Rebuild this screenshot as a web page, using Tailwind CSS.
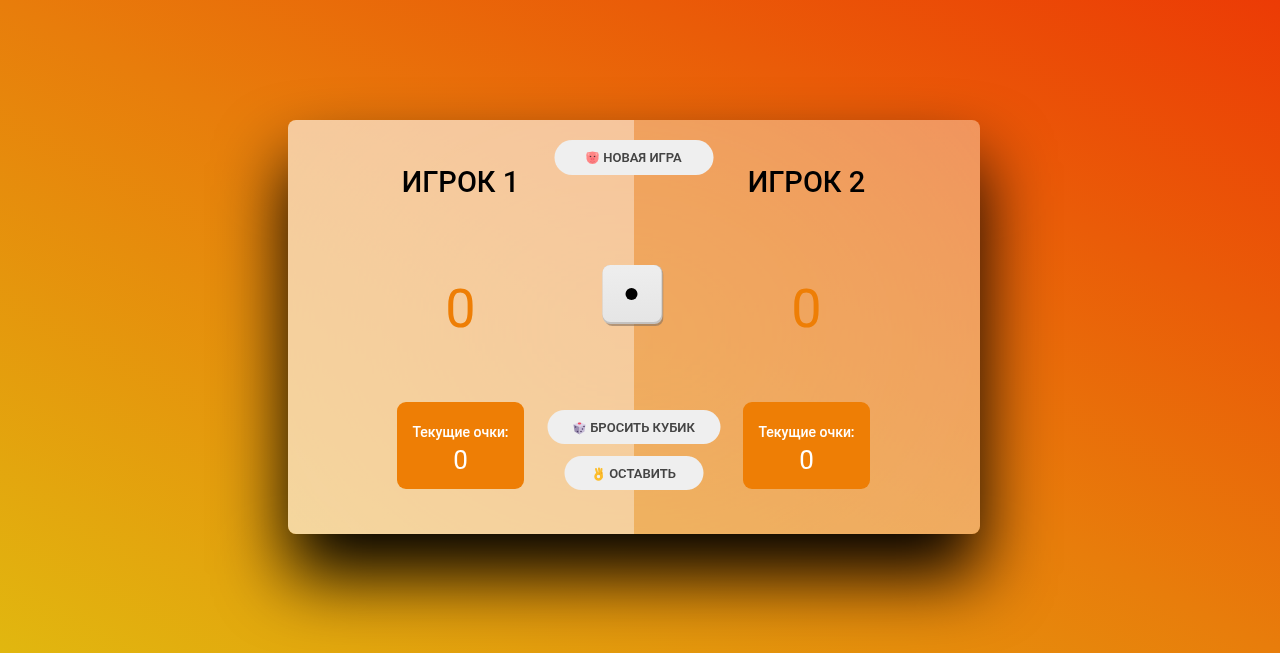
<!DOCTYPE html>
<html lang="ru">
<head>
<meta charset="utf-8">
<meta name="viewport" content="width=device-width, initial-scale=1">
<title>Игра в кубик</title>
<script src="https://cdn.jsdelivr.net/npm/@tailwindcss/browser@4"></script>
</head>
<body class="flex min-h-screen items-center justify-center bg-[linear-gradient(to_top_right,#e1b70f,#e87d0b_50%,#ec3b05)] pr-[13px] font-[Roboto,'Open_Sans',sans-serif] text-black">
  <main class="relative flex w-full max-w-[692px] rounded-lg shadow-[0_41px_70px_0_#000] backdrop-blur-[220px]">
    <section class="flex flex-1 flex-col items-center rounded-l-lg bg-white/60 pt-11 pb-[45px]">
      <h2 class="text-[29px] leading-9 font-medium">ИГРОК 1</h2>
      <p class="mt-[77px] text-[54px] leading-16 text-[#ee7e05]">0</p>
      <div class="mt-[61px] flex w-[127px] flex-col items-center gap-[2px] rounded-[9px] bg-[#ee7e05] pt-5 pb-[13px] text-white">
        <p class="text-sm leading-5 font-medium">Текущие очки:</p>
        <p class="text-[26px] leading-8">0</p>
      </div>
    </section>
    <section class="flex flex-1 flex-col items-center rounded-r-lg bg-white/35 pt-11 pb-[45px]">
      <h2 class="text-[29px] leading-9 font-medium">ИГРОК 2</h2>
      <p class="mt-[77px] text-[54px] leading-16 text-[#ee7e05]">0</p>
      <div class="mt-[61px] flex w-[127px] flex-col items-center gap-[2px] rounded-[9px] bg-[#ee7e05] pt-5 pb-[13px] text-white">
        <p class="text-sm leading-5 font-medium">Текущие очки:</p>
        <p class="text-[26px] leading-8">0</p>
      </div>
    </section>

    <!-- Controls over the seam between the two players -->
    <div class="absolute inset-y-0 left-1/2 flex -translate-x-1/2 flex-col items-center pt-5 text-[13px] font-semibold text-[#444]">
      <button type="button" class="flex h-[35px] w-[159px] items-center justify-center gap-1 rounded-full bg-[#efefef] pt-[2px]">
        <svg class="h-[14px] w-[14px]" viewBox="0 0 28 28" aria-hidden="true">
          <path d="M3 3 9 2q5-2 10 0l6 1q2 4 1 9 1 5-2 9-4 5-10 5T4 21Q1 17 2 12 1 7 3 3Z" fill="#ff8585"/>
          <path d="M4 4l5 1-4 5ZM24 4l-5 1 4 5Z" fill="#ffaaa6"/>
          <circle cx="10" cy="11" r="1.6" fill="#55303a"/><circle cx="18" cy="11" r="1.6" fill="#55303a"/>
          <ellipse cx="14" cy="16" rx="5" ry="3.5" fill="#ff6f78"/>
          <circle cx="12" cy="16" r=".8" fill="#b84a5a"/><circle cx="16" cy="16" r=".8" fill="#b84a5a"/>
          <path d="M9 21q5 3 10 0" fill="none" stroke="#e05a68" stroke-width="1.2"/>
        </svg>
        <span>НОВАЯ ИГРА</span>
      </button>

      <!-- Die face: one -->
      <svg class="mt-[89px] -ml-[2px] h-[62px] w-[62px]" viewBox="0 0 62 62" role="img" aria-label="Кубик: 1">
        <defs>
          <linearGradient id="face" x1="0" y1="0" x2="0" y2="1"><stop offset="0" stop-color="#eeeeee"/><stop offset="1" stop-color="#e5e5e5"/></linearGradient>
        </defs>
        <rect x="3" y="3" width="59" height="59" rx="8" fill="#86715f" opacity=".6"/>
        <rect x="1" y="1" width="60" height="59" rx="8" fill="#c4c2c0"/>
        <rect x="1" y="1" width="59" height="57" rx="8" fill="url(#face)"/>
        <circle cx="30" cy="30" r="6" fill="#000"/>
      </svg>

      <button type="button" class="mt-[84px] flex h-[34px] w-[173px] items-center justify-center gap-1 rounded-full bg-[#efefef] pt-[2px]">
        <svg class="h-[14px] w-[14px]" viewBox="0 0 28 28" aria-hidden="true">
          <path d="M2 7 14 2l12 5-12 5Z" fill="#dcd3e8"/>
          <path d="M2 7l12 5v15L4 21Z" fill="#9c8fb2"/>
          <path d="M26 7l-12 5v15l10-6Z" fill="#c6bbd6"/>
          <ellipse cx="14" cy="5" rx="3.5" ry="1.8" fill="#f24860"/>
          <g fill="#4b3d65"><circle cx="6" cy="12" r="1.6"/><circle cx="10" cy="21" r="1.6"/><circle cx="23" cy="11" r="1.6"/><circle cx="20" cy="16" r="1.6"/><circle cx="17" cy="21" r="1.6"/></g>
        </svg>
        <span>БРОСИТЬ КУБИК</span>
      </button>
      <button type="button" class="mt-3 flex h-[34px] w-[139px] items-center justify-center gap-1 rounded-full bg-[#efefef] pt-[2px]">
        <svg class="h-[14px] w-[14px]" viewBox="0 0 28 28" aria-hidden="true">
          <g fill="none" stroke="#fcbd2c" stroke-linecap="round">
            <path d="M12 14 9 4M16 12 15 3M19 13 20 4" stroke-width="4"/>
            <circle cx="14" cy="19" r="6" stroke-width="5"/>
            <path d="M20 12v8" stroke-width="5"/>
          </g>
          <path d="M17 12l-2 3M20 10v4" fill="none" stroke="#e69420" stroke-width="1"/>
        </svg>
        <span>ОСТАВИТЬ</span>
      </button>
    </div>
  </main>
</body>
</html>
